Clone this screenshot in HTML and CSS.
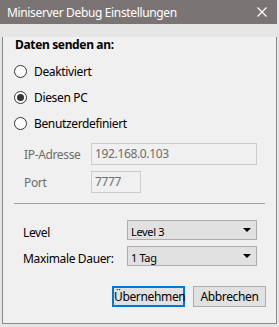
FILE: index.html
```html
<!DOCTYPE html>
<html>
<head>
<title>Miniserver Debug Einstellungen</title>
<link rel="stylesheet" href="styles.css">
</head>
<body>

    <div class="window">

        <div class="titlebar">
            <span class="title">Miniserver Debug Einstellungen</span>
            <svg class="close" width="10" height="10" viewBox="0 0 10 10">
                <path d="M0.5 0.5 L9.5 9.5 M9.5 0.5 L0.5 9.5" stroke="#fff" stroke-width="1.2" fill="none"/>
            </svg>
        </div>

        <div class="content">

            <div class="heading">Daten senden an:</div>

            <div class="radios">
                <div class="radio"><span class="dot"></span>Deaktiviert</div>
                <div class="radio"><span class="dot checked"></span>Diesen PC</div>
                <div class="radio"><span class="dot"></span>Benutzerdefiniert</div>
            </div>

            <div class="fields">
                <div class="field">
                    <span class="field-label">IP-Adresse</span>
                    <span class="textbox ip">192.168.0.103</span>
                </div>
                <div class="field">
                    <span class="field-label">Port</span>
                    <span class="textbox port">7777</span>
                </div>
            </div>

            <div class="separator"></div>

            <div class="selects">
                <div class="select-row">
                    <span class="select-label">Level</span>
                    <span class="combo">Level 3<span class="arrow"></span></span>
                </div>
                <div class="select-row">
                    <span class="select-label">Maximale Dauer:</span>
                    <span class="combo">1 Tag<span class="arrow"></span></span>
                </div>
            </div>

            <div class="buttons">
                <button class="btn default">Übernehmen</button>
                <button class="btn">Abbrechen</button>
            </div>

        </div>

    </div>

</body>
</html>
```

FILE: styles.css
```css
body {
    margin: 0;
    background-color: #e6e6e6;
    font-family: "Noto Sans", "Open Sans", sans-serif;
    font-size: 12px;
    letter-spacing: -0.35px;
    color: #000;
}

.window {
    width: 277px;
}

.titlebar {
    display: flex;
    align-items: center;
    justify-content: space-between;
    height: 24px;
    background-color: #7a7574;
    color: #fff;
    padding: 0 10px 0 7px;
}

.title {
    font-size: 12px;
}

.content {
    margin-left: 2px;
    border-left: 1px solid #8a8a8a;
    border-right: 1px solid #8a8a8a;
    border-bottom: 1px solid #8a8a8a;
    background-color: #f0f0f0;
    padding-bottom: 16px;
}

.heading {
    margin-top: 13px;
    padding-left: 12px;
    height: 16px;
    line-height: 16px;
    font-weight: bold;
}

.radios {
    margin-top: 5px;
}

.radio {
    display: flex;
    align-items: center;
    height: 26px;
    padding-left: 11px;
}

.dot {
    width: 11px;
    height: 11px;
    border: 1px solid #333;
    border-radius: 50%;
    background-color: #fff;
    margin-right: 7px;
    display: flex;
    align-items: center;
    justify-content: center;
}

.dot.checked::after {
    content: "";
    width: 7px;
    height: 7px;
    border-radius: 50%;
    background-color: #333;
}

.fields {
    margin-top: 7px;
    display: flex;
    flex-direction: column;
    gap: 6px;
}

.field {
    display: flex;
    align-items: center;
    height: 22px;
    padding-left: 21px;
}

.field-label {
    width: 67px;
    color: #6d6d6d;
}

.textbox {
    box-sizing: border-box;
    height: 22px;
    line-height: 20px;
    border: 1px solid #cccccc;
    padding-left: 3px;
    color: #6d6d6d;
}

.ip {
    width: 166px;
}

.port {
    width: 50px;
}

.separator {
    margin: 10px 11px 0 11px;
    border-top: 1px solid #a0a0a0;
}

.selects {
    margin-top: 16px;
    display: flex;
    flex-direction: column;
    gap: 6px;
}

.select-row {
    display: flex;
    align-items: center;
    height: 20px;
    padding-left: 20px;
}

.select-label {
    width: 104px;
    padding-top: 4px;
}

.combo {
    box-sizing: border-box;
    display: flex;
    align-items: center;
    justify-content: space-between;
    width: 130px;
    height: 20px;
    background-color: #e1e1e1;
    border: 1px solid #adadad;
    padding: 2px 5px 0 3px;
    font-size: 11px;
}

.arrow {
    width: 0;
    height: 0;
    border-left: 4px solid transparent;
    border-right: 4px solid transparent;
    border-top: 4px solid #000;
    margin-top: -2px;
}

.buttons {
    margin-top: 20px;
    display: flex;
    justify-content: flex-end;
    gap: 8px;
    padding-right: 10px;
}

.btn {
    box-sizing: border-box;
    width: 73px;
    height: 21px;
    padding: 0;
    background-color: #e1e1e1;
    border: 1px solid #adadad;
    font-family: "Noto Sans", "Open Sans", sans-serif;
    font-size: 12px;
    letter-spacing: -0.35px;
    color: #000;
}

.btn.default {
    border: 2px solid #0078d7;
}
```
